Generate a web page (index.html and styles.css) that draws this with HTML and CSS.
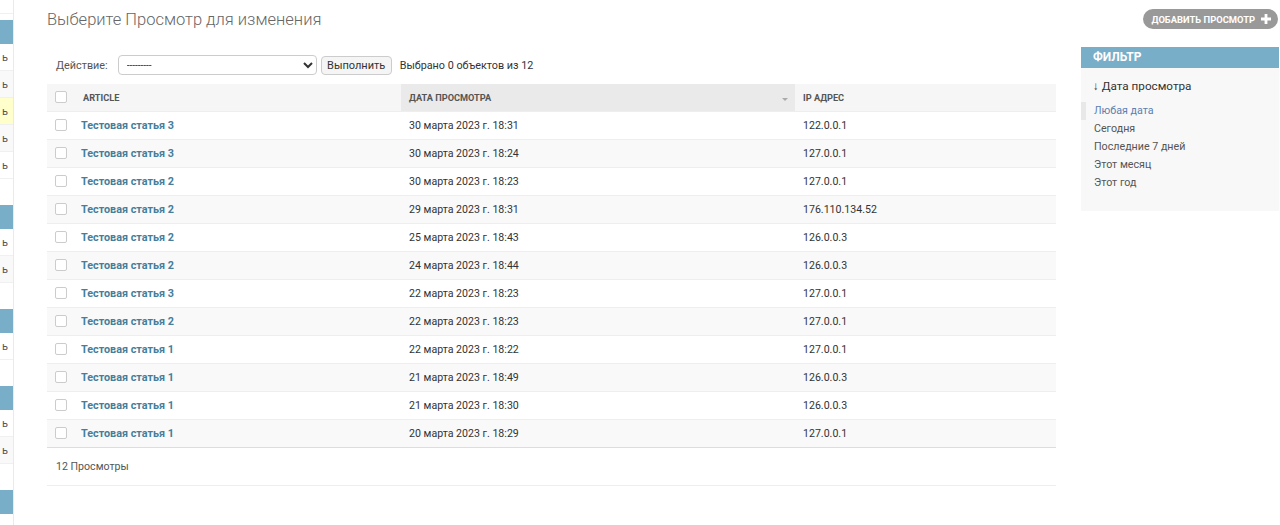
FILE: index.html
```html
<!DOCTYPE html>
<html lang="ru">
<head>
<meta charset="utf-8">
<title>Выберите Просмотр для изменения</title>
<link rel="stylesheet" href="styles.css">
</head>
<body>
<div class="page">
  <nav class="sidebar">
    <div class="srow top"></div>
    <div class="scap first"></div>
    <div class="srow">ь</div>
    <div class="srow alt">ь</div>
    <div class="srow current">ь</div>
    <div class="srow alt">ь</div>
    <div class="srow">ь</div>
    <div class="scap"></div>
    <div class="srow">ь</div>
    <div class="srow alt">ь</div>
    <div class="scap"></div>
    <div class="srow">ь</div>
    <div class="scap"></div>
    <div class="srow">ь</div>
    <div class="srow alt">ь</div>
    <div class="scap"></div>
    <div class="srow"></div>
  </nav>
  <main class="main">
    <div class="head">
      <h1 class="title">Выберите Просмотр для изменения</h1>
      <a class="addlink" href="#">ДОБАВИТЬ ПРОСМОТР
        <svg class="plus" width="10" height="10" viewBox="0 0 10 10"><path d="M3.6 0h2.8v3.6H10v2.8H6.4V10H3.6V6.4H0V3.6h3.6z" fill="#fff"/></svg>
      </a>
    </div>
    <div class="changelist">
      <div class="results">
        <div class="actions">
          <label class="alabel">Действие:</label>
          <select class="aselect"><option>---------</option></select>
          <button class="go" type="button">Выполнить</button>
          <span class="counter">Выбрано 0 объектов из 12</span>
        </div>
        <table class="tbl">
          <thead>
            <tr>
              <th class="c-check"><span class="cb"></span></th>
              <th class="c-art">ARTICLE</th>
              <th class="c-date sorted">ДАТА ПРОСМОТРА<span class="sortarrow"></span></th>
              <th class="c-ip">IP АДРЕС</th>
            </tr>
          </thead>
          <tbody>
            <tr><td><span class="cb"></span></td><td class="art"><a href="#">Тестовая статья 3</a></td><td class="date">30 марта 2023 г. 18:31</td><td class="ip">122.0.0.1</td></tr>
            <tr><td><span class="cb"></span></td><td class="art"><a href="#">Тестовая статья 3</a></td><td class="date">30 марта 2023 г. 18:24</td><td class="ip">127.0.0.1</td></tr>
            <tr><td><span class="cb"></span></td><td class="art"><a href="#">Тестовая статья 2</a></td><td class="date">30 марта 2023 г. 18:23</td><td class="ip">127.0.0.1</td></tr>
            <tr><td><span class="cb"></span></td><td class="art"><a href="#">Тестовая статья 2</a></td><td class="date">29 марта 2023 г. 18:31</td><td class="ip">176.110.134.52</td></tr>
            <tr><td><span class="cb"></span></td><td class="art"><a href="#">Тестовая статья 2</a></td><td class="date">25 марта 2023 г. 18:43</td><td class="ip">126.0.0.3</td></tr>
            <tr><td><span class="cb"></span></td><td class="art"><a href="#">Тестовая статья 2</a></td><td class="date">24 марта 2023 г. 18:44</td><td class="ip">126.0.0.3</td></tr>
            <tr><td><span class="cb"></span></td><td class="art"><a href="#">Тестовая статья 3</a></td><td class="date">22 марта 2023 г. 18:23</td><td class="ip">127.0.0.1</td></tr>
            <tr><td><span class="cb"></span></td><td class="art"><a href="#">Тестовая статья 2</a></td><td class="date">22 марта 2023 г. 18:23</td><td class="ip">127.0.0.1</td></tr>
            <tr><td><span class="cb"></span></td><td class="art"><a href="#">Тестовая статья 1</a></td><td class="date">22 марта 2023 г. 18:22</td><td class="ip">127.0.0.1</td></tr>
            <tr><td><span class="cb"></span></td><td class="art"><a href="#">Тестовая статья 1</a></td><td class="date">21 марта 2023 г. 18:49</td><td class="ip">126.0.0.3</td></tr>
            <tr><td><span class="cb"></span></td><td class="art"><a href="#">Тестовая статья 1</a></td><td class="date">21 марта 2023 г. 18:30</td><td class="ip">126.0.0.3</td></tr>
            <tr><td><span class="cb"></span></td><td class="art"><a href="#">Тестовая статья 1</a></td><td class="date">20 марта 2023 г. 18:29</td><td class="ip">127.0.0.1</td></tr>
          </tbody>
        </table>
        <p class="paginator">12 Просмотры</p>
      </div>
      <aside class="filter">
        <h2 class="fhead">ФИЛЬТР</h2>
        <h3 class="ftitle">↓ Дата просмотра</h3>
        <ul class="flist">
          <li class="selected"><a href="#">Любая дата</a></li>
          <li><a href="#">Сегодня</a></li>
          <li><a href="#">Последние 7 дней</a></li>
          <li><a href="#">Этот месяц</a></li>
          <li><a href="#">Этот год</a></li>
        </ul>
      </aside>
    </div>
  </main>
</div>
</body>
</html>
```

FILE: styles.css
```css
* { box-sizing: border-box; }
html, body { margin: 0; padding: 0; background: #fff; }
body {
  font-family: Roboto, "Liberation Sans", "Noto Sans", sans-serif;
  font-size: 13px;
  color: #333;
  overflow: hidden;
}
a { text-decoration: none; }

.page { display: flex; min-height: 525px; }

/* clipped nav sidebar */
.sidebar {
  width: 14px;
  flex: none;
  border-right: 1px solid #eaeaea;
  overflow: hidden;
  font-size: 11px;
  color: #555;
}
.srow {
  height: 27px;
  line-height: 27px;
  text-align: right;
  padding-right: 5px;
  border-bottom: 1px solid #f0f0f0;
  background: #fff;
}
.srow.top { height: 14px; }
.srow.alt { background: #f9f9f9; }
.srow.current { background: #ffffcc; }
.scap { height: 24px; background: #79aec8; margin-top: 26px; }
.scap.first { margin-top: 6px; }

.main { flex: 1; padding: 0 1px 0 33px; }

.head {
  display: flex;
  justify-content: space-between;
  align-items: flex-start;
  padding-top: 9px;
  height: 47px;
}
.title {
  margin: 0;
  font-size: 16.5px;
  line-height: 22px;
  font-weight: 300;
  color: #666;
}
.addlink {
  display: flex;
  align-items: center;
  gap: 6px;
  height: 20px;
  padding: 0 7px 0 9px;
  border-radius: 15px;
  background: #999;
  color: #fff;
  font-size: 9.4px;
  font-weight: 700;
  margin-right: 1px;
}

.changelist { display: flex; gap: 25px; align-items: flex-start; }
.results { width: 1009px; flex: none; }

.actions {
  display: flex;
  align-items: center;
  padding: 8px 9px 9px;
  height: 37px;
}
.alabel { color: #555; margin-right: 10px; font-size: 10.8px; }
.aselect {
  width: 199px;
  height: 20px;
  border: 1px solid #ccc;
  border-radius: 4px;
  background: #fff;
  font-family: inherit;
  font-size: 10px;
  color: #333;
  padding: 0 4px;
}
.go {
  margin-left: 4px;
  height: 19px;
  width: 71px;
  padding: 0;
  border: 1px solid #ccc;
  border-radius: 4px;
  background: #f5f5f5;
  font-family: inherit;
  font-size: 11px;
  color: #333;
}
.counter { margin-left: 8px; font-size: 10.8px; color: #333; }

.tbl { width: 100%; border-collapse: collapse; table-layout: fixed; }
.tbl th {
  height: 27px;
  padding: 0 8px;
  text-align: left;
  background: #f6f6f6;
  font-size: 9.2px;
  font-weight: 700;
  color: #555;
  border-bottom: 1px solid #eee;
  position: relative;
}
.tbl th.c-check { width: 28px; }
.tbl th.c-art { width: 326px; }
.tbl th.c-date { width: 394px; }
.tbl th.sorted { background: #eaeaea; }
.sortarrow {
  position: absolute;
  right: 7px;
  top: 14px;
  width: 0; height: 0;
  border-left: 3px solid transparent;
  border-right: 3px solid transparent;
  border-top: 3px solid #aaa;
}
.tbl td {
  height: 28px;
  padding: 0 8px;
  border-bottom: 1px solid #eee;
  font-size: 10.6px;
  color: #333;
}
.tbl td.art { padding-left: 6px; }
.tbl tbody tr:nth-child(even) td { background: #f9f9f9; }
.tbl tbody tr:last-child td { border-bottom: 1px solid #ddd; }
.tbl td a { color: #447e9b; font-weight: 700; font-size: 10.8px; }
.cb {
  display: block;
  width: 12px;
  height: 12px;
  border: 1px solid #ccc;
  border-radius: 2px;
  background: #fff;
}

.paginator {
  margin: 0;
  padding: 10px 9px;
  line-height: 17px;
  font-size: 10.6px;
  color: #555;
  border-bottom: 1px solid #eee;
}

.filter {
  width: 198px;
  flex: none;
  background: #f8f8f8;
  padding-bottom: 19px;
}
.fhead {
  margin: 0;
  height: 21px;
  line-height: 21px;
  padding: 0 12px;
  background: #79aec8;
  color: #fff;
  font-size: 12px;
  font-weight: 700;
}
.ftitle {
  margin: 9px 0 7px;
  padding: 0 12px;
  line-height: 18px;
  font-size: 11.7px;
  font-weight: 400;
  color: #333;
}
.flist { list-style: none; margin: 0; padding: 0; }
.flist li {
  line-height: 18px;
  padding-left: 13px;
  font-size: 10.7px;
}
.flist li a { color: #555; }
.flist li.selected { border-left: 5px solid #e8e8e8; padding-left: 8px; }
.flist li.selected a { color: #5b80b2; }
```
